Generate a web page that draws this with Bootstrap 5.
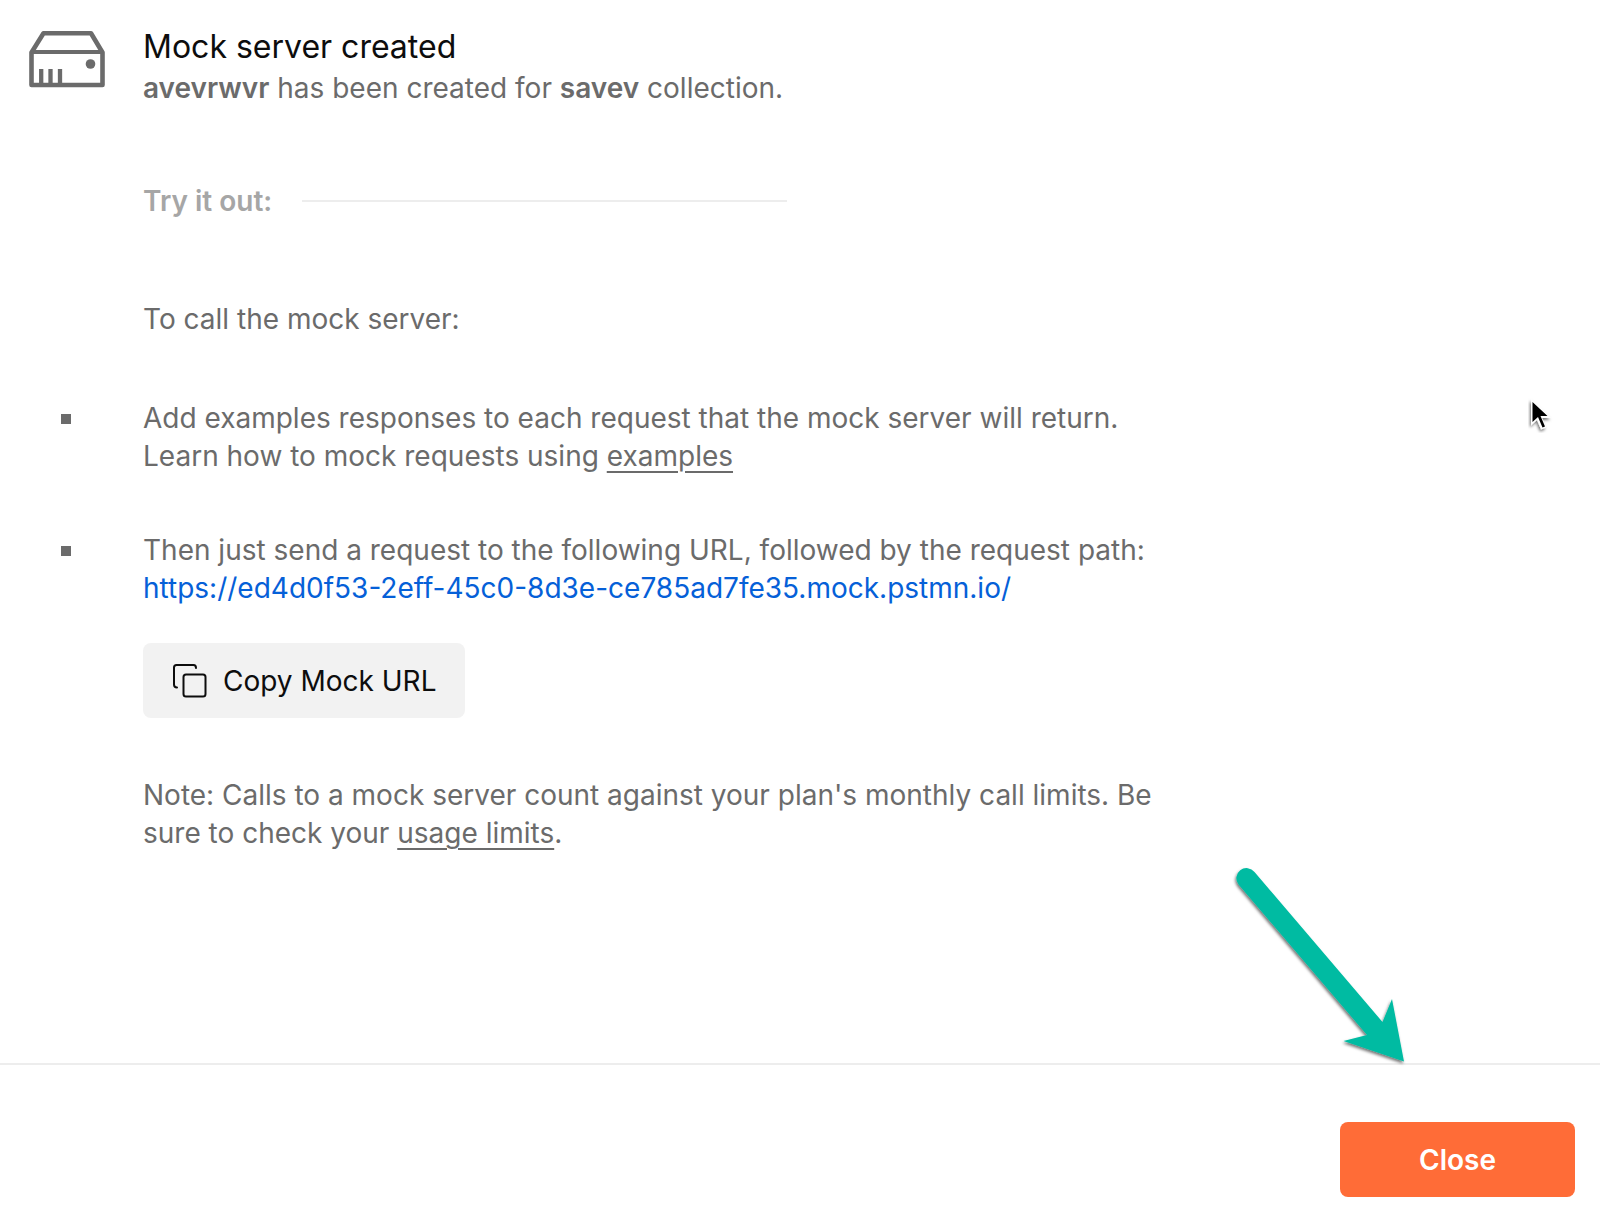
<!DOCTYPE html>
<html lang="en">
<head>
<meta charset="utf-8">
<meta name="viewport" content="width=device-width, initial-scale=1">
<title>Mock server created</title>
<link href="https://cdn.jsdelivr.net/npm/bootstrap@5.3.0/dist/css/bootstrap.min.css" rel="stylesheet">
<style>
body { font-family: Inter, "Liberation Sans", sans-serif; font-size: 28px; line-height: 38px; color: #6b6b6b; background: #fff; }
.mock-main { padding: 24px 24px 32px 28px; }
.mock-gutter { width: 115px; flex: none; }
.mock-heading { max-width: 644px; }
.mock-title { font-size: 32px; line-height: 45px; font-weight: 400; color: #0d0d0d; }
.mock-text { max-width: 1040px; }
.mock-try { color: #a6a6a6; gap: 30px; margin-top: 75px; }
.mock-subtitle { font-size: 28px; line-height: 38px; }
.mock-rule { height: 2px; background: #ededed; }
.mock-intro { margin-top: 80px; }
.mock-steps { margin-top: 61px; gap: 56px; }
.mock-bullet { width: 10px; height: 10px; background: #6b6b6b; margin: 15px 0 0 33px; }
.mock-link { color: inherit; text-decoration-thickness: 2px; text-underline-offset: 5px; }
.mock-url { color: #0560d8; }
.btn.mock-copy, .btn.mock-close { font-size: 28px; line-height: 38px; height: 75px; border: 0; border-radius: 8px; }
.btn.mock-copy { background: #f2f2f2; color: #0d0d0d; padding: 0 29px; gap: 15px; margin-top: 36px; }
.mock-note { margin-top: 58px; }
.mock-footer { border-top: 2px solid #ededed; padding: 57px 25px 19px; }
.btn.mock-close { background: #ff6c37; color: #fff; width: 235px; font-weight: 600; }
.mock-arrow { right: 194px; bottom: 147px; pointer-events: none; }
.mock-cursor { right: 44px; top: 397px; pointer-events: none; }
</style>
</head>
<body>
<div class="d-flex flex-column min-vh-100 position-relative">
  <main class="mock-main flex-grow-1">
    <header class="d-flex">
      <div class="mock-gutter">
        <svg class="d-block" width="78" height="66" viewBox="0 0 78 66" fill="none" stroke="#6b6b6b" stroke-width="4.600" stroke-linejoin="round" aria-hidden="true">
          <path d="M3.500 28.500 15.500 9.300h47.500L74.500 28.500V61h-71z"/>
          <path d="M3.500 28h71" stroke-width="4"/>
          <path d="M13.200 45v15M22.500 45v15M32 45v15" stroke-width="4.300"/>
          <circle cx="62.500" cy="40" r="4.800" fill="#6b6b6b" stroke="none"/>
        </svg>
      </div>
      <div class="mock-heading flex-grow-1">
        <h1 class="mock-title mb-0">Mock server created</h1>
        <p class="mb-0"><strong class="fw-semibold">avevrwvr</strong> has been created for <strong class="fw-semibold">savev</strong> collection.</p>
        <div class="mock-try d-flex align-items-center">
          <h2 class="mock-subtitle mb-0 fw-semibold" id="try">Try it out:</h2>
          <div class="mock-rule flex-grow-1"></div>
        </div>
      </div>
    </header>
    <section aria-labelledby="try">
      <div class="d-flex mock-intro">
        <div class="mock-gutter"></div>
        <p class="mb-0">To call the mock server:</p>
      </div>
      <ul class="list-unstyled mock-steps mb-0 d-flex flex-column">
        <li class="d-flex">
          <div class="mock-gutter"><div class="mock-bullet"></div></div>
          <p class="mock-text mb-0">Add examples responses to each request that the mock server will return. Learn how to mock requests using <a class="mock-link" href="#examples">examples</a></p>
        </li>
        <li class="d-flex">
          <div class="mock-gutter"><div class="mock-bullet"></div></div>
          <div class="mock-text">
            <p class="mb-0">Then just send a request to the following URL, followed by the request path: <a class="mock-url text-decoration-none d-block" href="#mock">https://ed4d0f53-2eff-45c0-8d3e-ce785ad7fe35.mock.pstmn.io/</a></p>
            <button type="button" class="btn mock-copy d-inline-flex align-items-center">
              <svg width="36" height="36" viewBox="0 0 36 36" fill="none" stroke="#0d0d0d" stroke-width="2" stroke-linecap="round" aria-hidden="true">
                <path d="M5 24.500Q2 24.500 2 21.500V4.500Q2 2 4.500 2H21.500Q24 2 24 5"/>
                <rect x="11.500" y="11.500" width="22" height="22" rx="2.500"/>
              </svg>
              Copy Mock URL
            </button>
            <p class="mock-note mb-0">Note: Calls to a mock server count against your plan's monthly call limits. Be sure to check your <a class="mock-link" href="#usage">usage limits</a>.</p>
          </div>
        </li>
      </ul>
    </section>
  </main>
  <footer class="mock-footer d-flex justify-content-end">
    <button type="button" class="btn mock-close">Close</button>
  </footer>

  <svg class="mock-arrow position-absolute" width="176" height="204" viewBox="0 0 176 204" aria-hidden="true">
    <defs><filter id="drop" x="-20%" y="-20%" width="140%" height="140%"><feDropShadow dx="-1" dy="2" stdDeviation="1.500" flood-color="#000" flood-opacity=".55"/></filter></defs>
    <path filter="url(#drop)" fill="#00bba2" d="M24.500 7A9.800 9.800 0 0 0 8.500 19.500L137 170 113.500 176 174 196.500 162 134 152.500 157z"/>
  </svg>
  <svg class="mock-cursor position-absolute" width="28" height="36" viewBox="0 0 28 36" aria-hidden="true">
    <path filter="url(#drop)" d="M3 2v26.500l6-5.500 4 9.500 5-2-4-9.500h9z" fill="#fff"/>
    <path d="M4.500 5v20l5.500-5 4.500 10.500 2.500-1-4.500-10.500h7z" fill="#000"/>
  </svg>
</div>
<script src="https://cdn.jsdelivr.net/npm/bootstrap@5.3.0/dist/js/bootstrap.bundle.min.js"></script>
</body>
</html>
